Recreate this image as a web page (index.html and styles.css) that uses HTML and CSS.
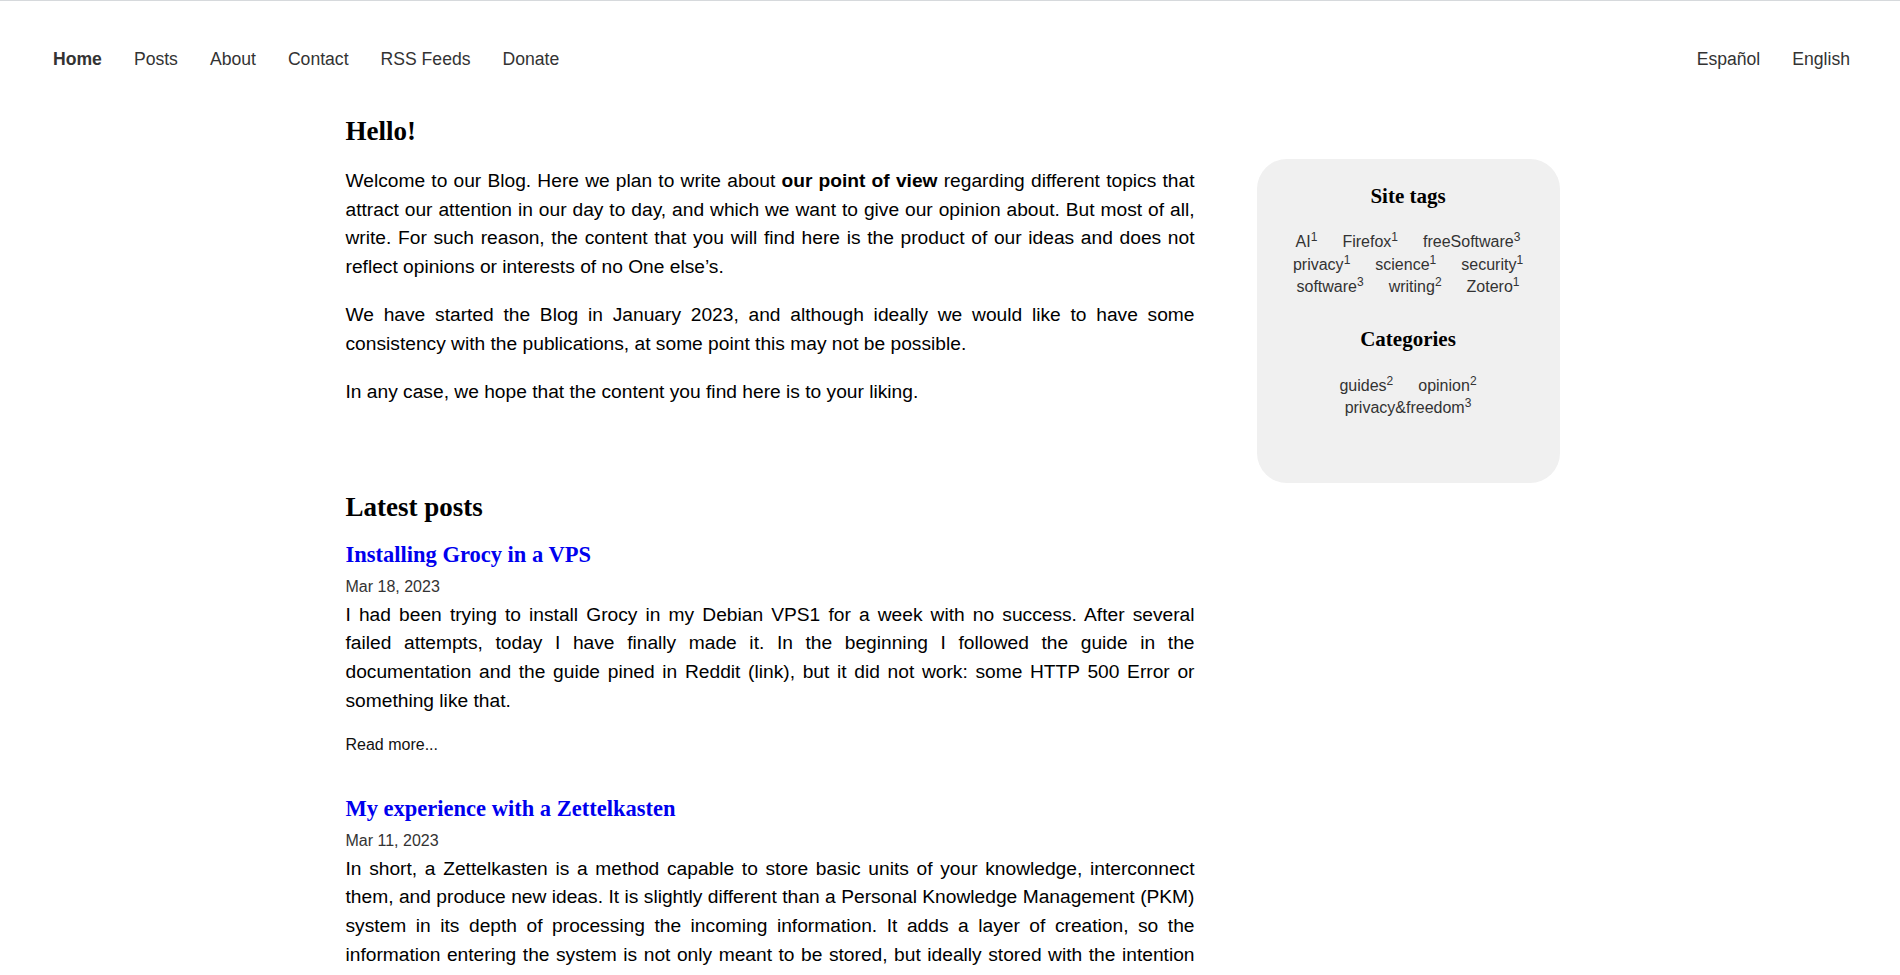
FILE: index.html
```html
<!DOCTYPE html>
<html lang="en">
<head>
<meta charset="utf-8">
<title>Blog</title>
<link rel="stylesheet" href="styles.css">
</head>
<body>
<header class="topbar">
  <nav class="nav">
    <a class="nav-link active" href="#">Home</a>
    <a class="nav-link" href="#">Posts</a>
    <a class="nav-link" href="#">About</a>
    <a class="nav-link" href="#">Contact</a>
    <a class="nav-link" href="#">RSS Feeds</a>
    <a class="nav-link" href="#">Donate</a>
  </nav>
  <nav class="nav">
    <a class="nav-link" href="#">Español</a>
    <a class="nav-link" href="#">English</a>
  </nav>
</header>
<div class="layout">
  <main class="content">
    <h2 class="page-title">Hello!</h2>
    <p class="text">Welcome to our Blog. Here we plan to write about <strong>our point of view</strong> regarding different topics that attract our attention in our day to day, and which we want to give our opinion about. But most of all, write. For such reason, the content that you will find here is the product of our ideas and does not reflect opinions or interests of no One else’s.</p>
    <p class="text">We have started the Blog in January 2023, and although ideally we would like to have some consistency with the publications, at some point this may not be possible.</p>
    <p class="text">In any case, we hope that the content you find here is to your liking.</p>

    <section class="latest">
      <h2 class="page-title">Latest posts</h2>
      <article class="post">
        <h3 class="post-title"><a href="#">Installing Grocy in a VPS</a></h3>
        <div class="post-date">Mar 18, 2023</div>
        <p class="post-summary">I had been trying to install Grocy in my Debian VPS1 for a week with no success. After several failed attempts, today I have finally made it. In the beginning I followed the guide in the documentation and the guide pined in Reddit (link), but it did not work: some HTTP 500 Error or something like that.</p>
        <a class="read-more" href="#">Read more...</a>
      </article>
      <article class="post">
        <h3 class="post-title"><a href="#">My experience with a Zettelkasten</a></h3>
        <div class="post-date">Mar 11, 2023</div>
        <p class="post-summary">In short, a Zettelkasten is a method capable to store basic units of your knowledge, interconnect them, and produce new ideas. It is slightly different than a Personal Knowledge Management (PKM) system in its depth of processing the incoming information. It adds a layer of creation, so the information entering the system is not only meant to be stored, but ideally stored with the intention of being connected to the previous knowledge and generating new insights from it.</p>
        <a class="read-more" href="#">Read more...</a>
      </article>
    </section>
  </main>
  <aside class="sidebar">
    <section class="side-section">
      <h3 class="side-title">Site tags</h3>
      <div class="tags">
        <a class="tag" href="#">AI<sup>1</sup></a>
        <a class="tag" href="#">Firefox<sup>1</sup></a>
        <a class="tag" href="#">freeSoftware<sup>3</sup></a>
        <a class="tag" href="#">privacy<sup>1</sup></a>
        <a class="tag" href="#">science<sup>1</sup></a>
        <a class="tag" href="#">security<sup>1</sup></a>
        <a class="tag" href="#">software<sup>3</sup></a>
        <a class="tag" href="#">writing<sup>2</sup></a>
        <a class="tag" href="#">Zotero<sup>1</sup></a>
      </div>
    </section>
    <section class="side-section">
      <h3 class="side-title">Categories</h3>
      <div class="tags">
        <a class="tag" href="#">guides<sup>2</sup></a>
        <a class="tag" href="#">opinion<sup>2</sup></a>
        <a class="tag" href="#">privacy&amp;freedom<sup>3</sup></a>
      </div>
    </section>
  </aside>
</div>
</body>
</html>
```

FILE: styles.css
```css
html, body {
  margin: 0;
  padding: 0;
  background: #ffffff;
}

body {
  font-family: "Liberation Sans", Arial, sans-serif;
  font-size: 19.2px;
  line-height: 1.5;
  color: #000000;
  border-top: 1px solid #d6d9dc;
}

a {
  text-decoration: none;
}

.topbar {
  display: flex;
  justify-content: space-between;
  align-items: center;
  padding: 44px 50px 0 53px;
}

.nav {
  display: flex;
  gap: 32px;
}

.nav-link {
  color: #333333;
  font-size: 17.6px;
  line-height: 28.8px;
}

.nav-link.active {
  font-weight: bold;
}

.layout {
  display: grid;
  grid-template-columns: 849px 303px;
  column-gap: 62px;
  justify-content: center;
  align-items: start;
  padding: 41.6px 0 0 5px;
}

.page-title {
  font-family: "Liberation Serif", "Times New Roman", serif;
  font-size: 27px;
  line-height: 1.2;
  font-weight: bold;
  margin: 0;
}

.text {
  margin: 19px 0;
  text-align: justify;
}

.latest {
  margin-top: 84.3px;
}

.post {
  margin-bottom: 37px;
}

.post-title {
  font-family: "Liberation Serif", "Times New Roman", serif;
  font-size: 22.5px;
  line-height: 1.2;
  font-weight: bold;
  margin: 18px 0 6px;
}

.post-title a {
  color: #0000ee;
}

.post-date {
  font-size: 16px;
  line-height: 25.6px;
  color: #333333;
}

.post-summary {
  margin: 1px 0 0;
  text-align: justify;
}

.read-more {
  display: block;
  margin-top: 16.5px;
  font-size: 16px;
  line-height: 25.6px;
  color: #111111;
}

.sidebar {
  margin-top: 43.6px;
  background: #f0f0f0;
  border-radius: 30px;
  padding: 24.6px 28px 64px;
  text-align: center;
}

.side-section + .side-section {
  margin-top: 28px;
}

.side-title {
  font-family: "Liberation Serif", "Times New Roman", serif;
  font-size: 21px;
  line-height: 1.2;
  font-weight: bold;
  margin: 0 0 22.7px;
  color: #000000;
}

.tags {
  display: flex;
  flex-wrap: wrap;
  justify-content: center;
  column-gap: 25px;
}

.tag {
  font-size: 16px;
  line-height: 22.4px;
  color: #333333;
}

.tag sup {
  font-size: 12px;
  line-height: 0;
  vertical-align: super;
}
```
